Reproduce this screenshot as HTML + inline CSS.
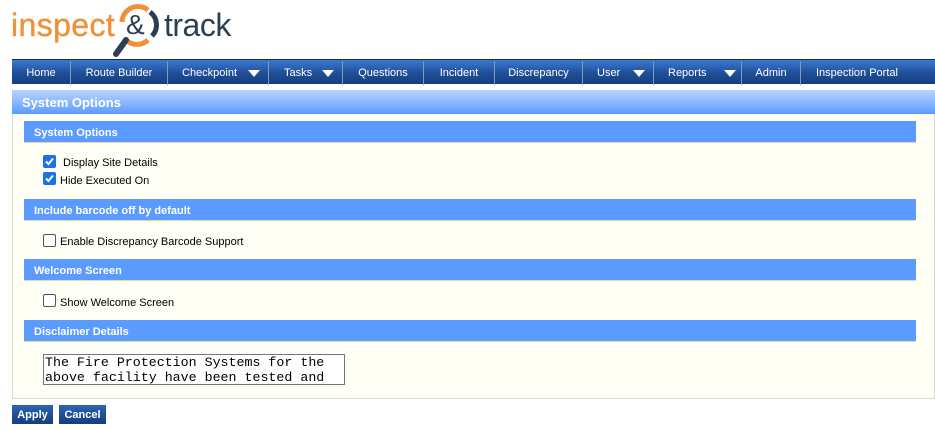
<!DOCTYPE html>
<html><head><meta charset="utf-8"><style>
*{margin:0;padding:0;box-sizing:border-box}
body{width:935px;height:430px;background:#fff;font-family:"Liberation Sans",sans-serif;position:relative;overflow:hidden}
.a{position:absolute}
.nav{left:12px;top:59px;width:923px;height:25px;background:linear-gradient(#3d7ad0,#1f4f98 55%,#173e7d);border-top:1px solid #0e2f63}
.nav div{position:absolute;top:1px;height:24px;line-height:24px;color:#fff;font-size:11px;text-align:center;border-right:1px solid #7d9bc6}
.tri{position:absolute;top:9px;width:0;height:0;border-left:6px solid transparent;border-right:6px solid transparent;border-top:7px solid #fff}
.hdr{left:12px;top:90px;width:923px;height:24px;background:linear-gradient(#b5d3ff,#8cb8ff 50%,#5b9bff);color:#fff;font-weight:bold;font-size:13px;line-height:26px;padding-left:10px}
.panel{left:12px;top:114px;width:923px;height:285px;background:#fffff5;border:1px solid #d8d8d8;border-top:none}
.sec{left:24px;width:892px;height:22px;background:#5b9bff;color:#fff;font-weight:bold;font-size:11px;line-height:24px;padding-left:10px;border-bottom:1px solid #e6d9a8}
.lbl{font-size:11px;color:#000}
.cb{width:13px;height:13px;border-radius:2px}
.on{background:#1a73e8}
.off{border:1px solid #555;background:#fff}
.btn{top:405px;height:19px;background:linear-gradient(#2d63b5,#163d7c);color:#fff;font-weight:bold;font-size:11px;line-height:20px;text-align:center}
</style></head><body>
<div class="a" style="left:11px;top:7px;font-size:32px;color:#f0913a;letter-spacing:0.4px;-webkit-text-stroke:0.4px #f0913a">inspect</div>
<svg class="a" style="left:108px;top:2px" width="56" height="58" viewBox="0 0 56 58">
<path d="M14 20 A16 16 0 0 1 40 8" stroke="#f0913a" stroke-width="5" fill="none"/>
<path d="M42 10 A16 16 0 0 1 44 34" stroke="#2c3e55" stroke-width="5" fill="none"/>
<path d="M40 38 A16 16 0 0 1 18 38" stroke="#f0913a" stroke-width="5" fill="none"/>
<line x1="18" y1="38" x2="8" y2="52" stroke="#2c3e55" stroke-width="6" stroke-linecap="round"/>
<text x="18" y="32" font-family="Liberation Sans" font-size="28" fill="#2c3e55">&amp;</text>
</svg>
<div class="a" style="left:164px;top:7px;font-size:32px;color:#2c3e55;letter-spacing:-0.5px">track</div>
<div class="a nav">
<div style="left:0;width:59px">Home</div>
<div style="left:59px;width:97px">Route Builder</div>
<div style="left:156px;width:101px;text-align:left;padding-left:14px">Checkpoint<span class="tri" style="left:80px"></span></div>
<div style="left:257px;width:74px;text-align:left;padding-left:15px">Tasks<span class="tri" style="left:53px"></span></div>
<div style="left:331px;width:81px">Questions</div>
<div style="left:412px;width:71px">Incident</div>
<div style="left:483px;width:88px">Discrepancy</div>
<div style="left:571px;width:71px;text-align:left;padding-left:14px">User<span class="tri" style="left:50px"></span></div>
<div style="left:642px;width:88px;text-align:left;padding-left:14px">Reports<span class="tri" style="left:70px"></span></div>
<div style="left:730px;width:59px">Admin</div>
<div style="left:789px;width:134px;border:none;text-align:left;padding-left:15px">Inspection Portal</div>
</div>
<div class="a hdr">System Options</div>
<div class="a panel"></div>
<div class="a sec" style="top:121px">System Options</div>
<div class="a cb on" style="left:43px;top:155px"><svg width="13" height="13"><path d="M3 6.5 L5.5 9 L10 3.5" stroke="#fff" stroke-width="2" fill="none"/></svg></div>
<div class="a lbl" style="left:63px;top:157px">Display Site Details</div>
<div class="a cb on" style="left:43px;top:172px"><svg width="13" height="13"><path d="M3 6.5 L5.5 9 L10 3.5" stroke="#fff" stroke-width="2" fill="none"/></svg></div>
<div class="a lbl" style="left:60px;top:175px">Hide Executed On</div>
<div class="a sec" style="top:199px">Include barcode off by default</div>
<div class="a cb off" style="left:43px;top:234px"></div>
<div class="a lbl" style="left:60px;top:236px">Enable Discrepancy Barcode Support</div>
<div class="a sec" style="top:259px">Welcome Screen</div>
<div class="a cb off" style="left:43px;top:294px"></div>
<div class="a lbl" style="left:60px;top:297px">Show Welcome Screen</div>
<div class="a sec" style="top:320px">Disclaimer Details</div>
<div class="a" style="left:43px;top:354px;width:302px;height:31px;border:1px solid #767676;background:#fff;font-family:'Liberation Mono',monospace;font-size:13.3px;line-height:15px;padding:0 1px;white-space:pre;overflow:hidden">The Fire Protection Systems for the
above facility have been tested and</div>
<div class="a btn" style="left:12px;width:41px">Apply</div>
<div class="a btn" style="left:59px;width:47px">Cancel</div>
</body></html>
